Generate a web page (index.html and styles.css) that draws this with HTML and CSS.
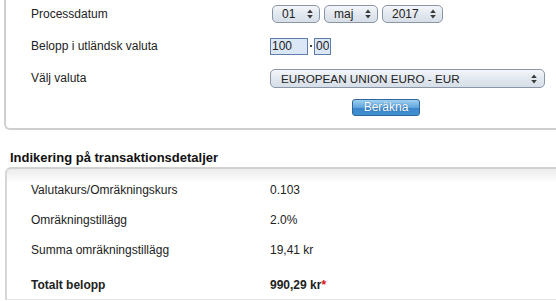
FILE: index.html
```html
<!DOCTYPE html>
<html lang="sv">
<head>
    <meta charset="UTF-8">
    <meta name="viewport" content="width=device-width, initial-scale=1.0">
    <title>Valutaomräkning</title>
    <link rel="stylesheet" href="styles.css">
</head>
<body>
    <!-- Formulär -->
    <div class="panel panel-form">
        <div class="form-row row-date">
            <span class="label">Processdatum</span>
            <div class="field date-fields">
                <span class="select-wrap sel-day">
                    <select><option>01</option></select>
                    <svg class="select-arrow" width="6" height="10" viewBox="0 0 6 10"><path d="M3 0.5L5.8 4H0.2Z M0.2 6H5.8L3 9.5Z"/></svg>
                </span>
                <span class="select-wrap sel-month">
                    <select><option>maj</option></select>
                    <svg class="select-arrow" width="6" height="10" viewBox="0 0 6 10"><path d="M3 0.5L5.8 4H0.2Z M0.2 6H5.8L3 9.5Z"/></svg>
                </span>
                <span class="select-wrap sel-year">
                    <select><option>2017</option></select>
                    <svg class="select-arrow" width="6" height="10" viewBox="0 0 6 10"><path d="M3 0.5L5.8 4H0.2Z M0.2 6H5.8L3 9.5Z"/></svg>
                </span>
            </div>
        </div>
        <div class="form-row row-amount">
            <span class="label">Belopp i utländsk valuta</span>
            <div class="field">
                <input type="text" class="amount amount-int" value="100">
                <span class="amount-sep"></span>
                <input type="text" class="amount amount-dec" value="00">
            </div>
        </div>
        <div class="form-row row-currency">
            <span class="label">Välj valuta</span>
            <div class="field">
                <span class="select-wrap sel-currency">
                    <select><option>EUROPEAN UNION EURO - EUR</option></select>
                    <svg class="select-arrow" width="6" height="10" viewBox="0 0 6 10"><path d="M3 0.5L5.8 4H0.2Z M0.2 6H5.8L3 9.5Z"/></svg>
                </span>
            </div>
        </div>
        <div class="form-row row-button">
            <span class="label"></span>
            <div class="field">
                <button class="btn-calc">Beräkna</button>
            </div>
        </div>
    </div>

    <!-- Resultat -->
    <h2 class="section-title">Indikering på transaktionsdetaljer</h2>
    <div class="panel panel-result">
        <div class="result-row">
            <span class="label">Valutakurs/Omräkningskurs</span>
            <span class="value">0.103</span>
        </div>
        <div class="result-row">
            <span class="label">Omräkningstillägg</span>
            <span class="value">2.0%</span>
        </div>
        <div class="result-row">
            <span class="label">Summa omräkningstillägg</span>
            <span class="value">19,41 kr</span>
        </div>
        <div class="result-row result-total">
            <span class="label">Totalt belopp</span>
            <span class="value">990,29 kr<span class="star">*</span></span>
        </div>
    </div>
</body>
</html>
```

FILE: styles.css
```css
body {
    margin: 0;
    font-family: "Liberation Sans", Arial, sans-serif;
    font-size: 12px;
    color: #222;
    background-color: #fff;
    overflow: hidden;
}

/* Paneler */
.panel {
    margin-right: -20px;
}

.panel-form {
    margin-left: 4px;
    border-left: 2px solid #cfcfcf;
    border-bottom: 2px solid #cfcfcf;
    border-bottom-left-radius: 6px;
    padding-left: 25px;
    padding-bottom: 12px;
}

.form-row {
    display: flex;
    align-items: center;
}

.form-row .label {
    width: 239px;
    flex-shrink: 0;
}

.field {
    display: flex;
    align-items: center;
}

.row-date { height: 28px; }
.row-amount { height: 36px; }
.row-currency { height: 28px; }
.row-button { margin-top: 7px; height: 17px; }

/* Listor */
.date-fields {
    gap: 4px;
    margin-left: 2px;
}

.select-wrap {
    position: relative;
    display: inline-block;
}

.select-wrap select {
    -webkit-appearance: none;
    appearance: none;
    box-sizing: border-box;
    height: 18px;
    border: 1px solid #8a96a6;
    border-radius: 5px;
    background: linear-gradient(#f4f7fa, #e2e8ef 50%, #d6dee7);
    font-family: "Liberation Sans", Arial, sans-serif;
    font-size: 12px;
    color: #222;
    padding: 0 0 0 9px;
    margin: 0;
    outline: none;
}

.select-arrow {
    position: absolute;
    top: 4px;
    right: 7px;
    fill: #3a3a3a;
    pointer-events: none;
}

.sel-day select { width: 48px; }
.sel-month select { width: 54px; }
.sel-year select { width: 61px; }

.sel-currency select {
    width: 275px;
    height: 19px;
    padding-left: 10px;
    font-size: 11.7px;
}

.sel-currency .select-arrow {
    top: 5px;
    right: 8px;
}

/* Belopp */
.amount {
    box-sizing: border-box;
    height: 17px;
    border: 1px solid #5d7fa9;
    background-color: #dbe7f6;
    font-family: "Liberation Sans", Arial, sans-serif;
    font-size: 12px;
    color: #222;
    padding: 0 1px;
    margin: 0;
    outline: none;
}

.amount-int { width: 38px; }
.amount-dec { width: 17px; }

.amount-sep {
    width: 2px;
    height: 2px;
    background-color: #444;
    margin: 0 2px 0 2px;
}

/* Knapp */
.btn-calc {
    box-sizing: border-box;
    margin-left: 82px;
    width: 68px;
    height: 17px;
    padding: 0;
    border: 1px solid #2f669c;
    border-radius: 3px;
    background: linear-gradient(#9fd0f2, #5fa6de 50%, #3b86c9 51%, #3f90d2);
    color: #fff;
    font-family: "Liberation Sans", Arial, sans-serif;
    font-size: 12px;
    line-height: 15px;
    text-shadow: 0 0 1px #1e5a92;
    cursor: pointer;
}

/* Rubrik */
.section-title {
    margin: 21px 0 2px 10px;
    font-size: 13px;
    line-height: 14px;
    font-weight: bold;
    color: #111;
}

/* Resultat */
.panel-result {
    margin-left: 5px;
    border-left: 2px solid #d6d6d6;
    border-top: 2px solid #d2d2d2;
    border-bottom: 1px solid #e4e4e4;
    border-top-left-radius: 6px;
    background: linear-gradient(#ececec, #fff 14px);
    padding: 6px 0 0 24px;
}

.result-row {
    display: flex;
    align-items: center;
    height: 30px;
}

.result-row .label {
    width: 239px;
    flex-shrink: 0;
}

.result-total {
    margin-top: 5px;
    height: 29px;
    font-weight: bold;
}

.star {
    color: #e01010;
}
```
